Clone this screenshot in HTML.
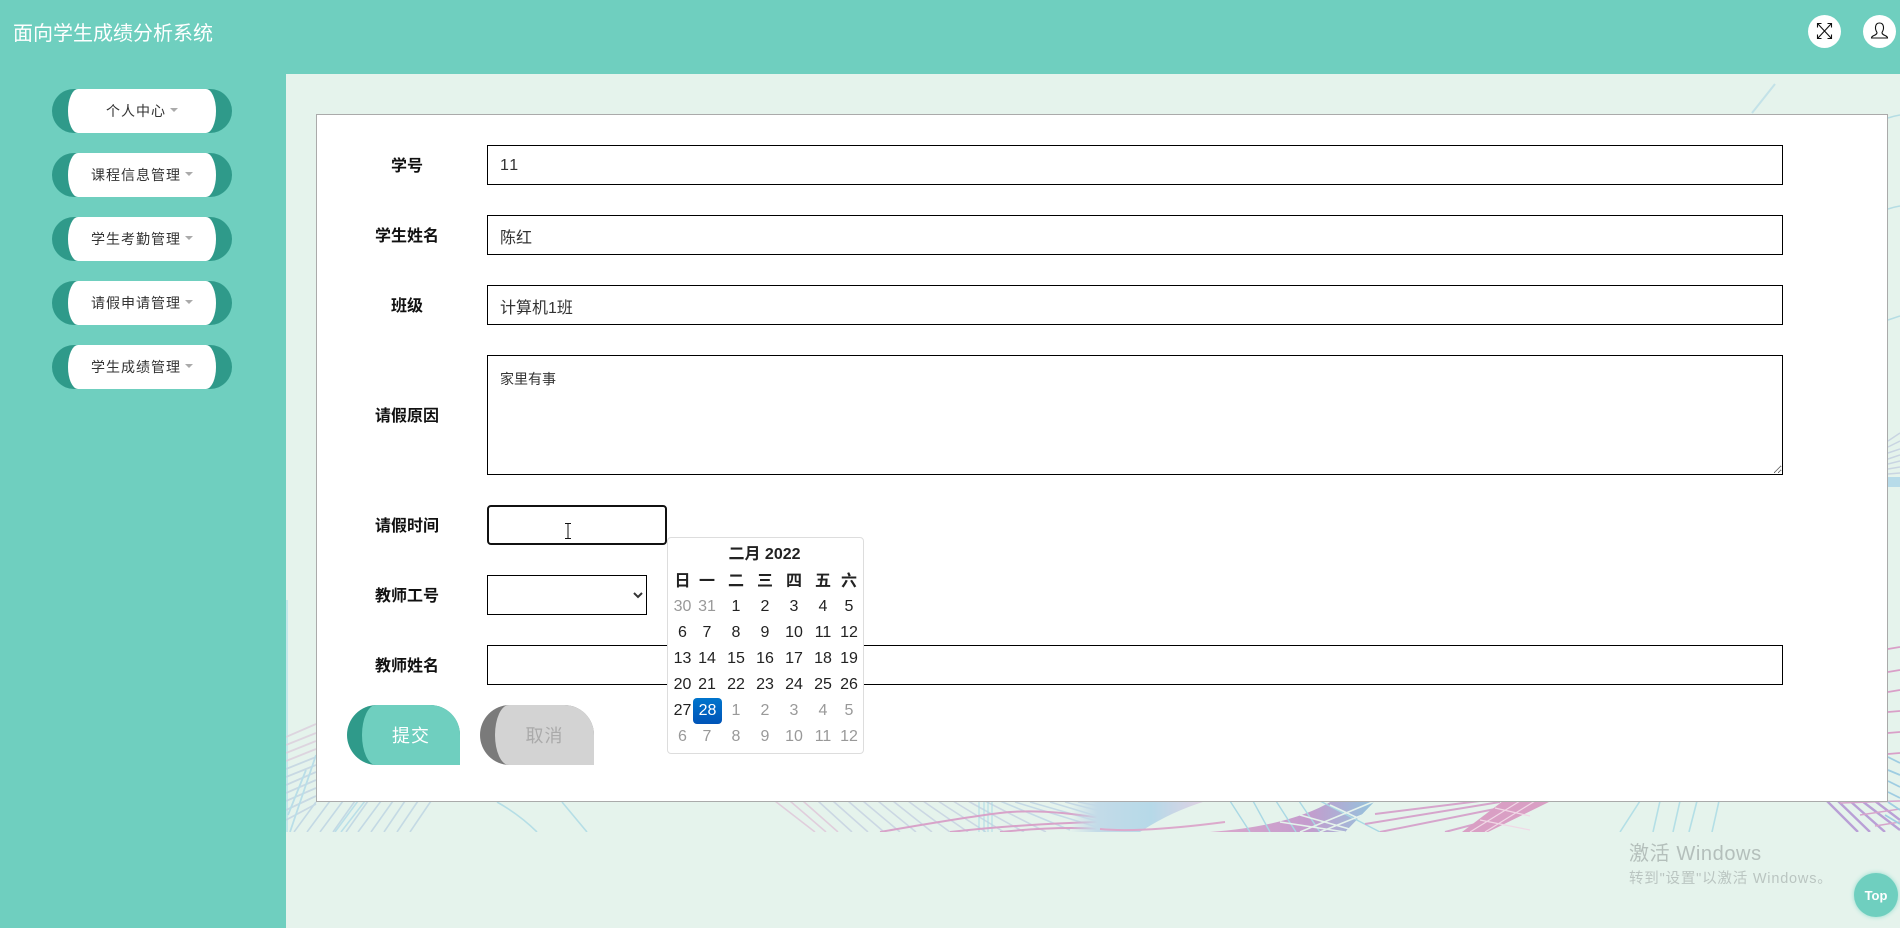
<!DOCTYPE html>
<html lang="zh">
<head>
<meta charset="utf-8">
<title>面向学生成绩分析系统</title>
<style>
*{box-sizing:border-box}
html,body{margin:0;padding:0;width:1900px;height:928px;overflow:hidden;background:#e5f3ec;font-family:"Liberation Sans","Noto Sans CJK SC",sans-serif;color:#222}
.abs{position:absolute}
#hdr{position:absolute;left:0;top:0;width:1900px;height:74px;background:#6fcfbf}
#title{position:absolute;left:13px;top:19px;font-size:20px;line-height:30px;color:#fff;white-space:nowrap}
.circ{position:absolute;top:15px;width:33px;height:33px;border-radius:50%;background:#fff}
#side{position:absolute;left:0;top:74px;width:286px;height:854px;background:#6fcfbf}
.nav{position:absolute;left:52px;width:180px;height:44px;border-radius:22px;background:#2f9a8a}
.nav div{position:absolute;left:16px;top:0;width:148px;height:44px;background:#fff;border-radius:10px/22px;display:flex;align-items:center;justify-content:center;font-size:14px;letter-spacing:1px;color:#333;padding-bottom:1px}
.nav i{display:inline-block;width:0;height:0;border-left:4px solid transparent;border-right:4px solid transparent;border-top:4px solid #aaa;margin-left:4px;margin-top:-2px}
#bg{position:absolute;left:286px;top:74px}
#panel{position:absolute;left:316px;top:114px;width:1572px;height:688px;background:#fff;border:1px solid #aaa;border-right-color:#aaa}
.lb{position:absolute;left:347px;width:120px;text-align:center;font-weight:bold;font-size:16px;line-height:24px;color:#111;white-space:nowrap}
input,textarea,select{position:absolute;left:487px;border:1px solid #000;background:#fff;font-family:"Liberation Sans","Noto Sans CJK SC",sans-serif;color:#333;font-size:16px;padding:2px 12px 0;outline:none;border-radius:0;margin:0}
.ip{width:1296px;height:40px}
textarea{width:1296px;height:120px;top:355px;font-size:14px;padding:13px 12px 12px;line-height:20px}
#dt{left:487px;top:505px;width:180px;height:40px;border:2px solid #111;border-radius:4px}
select{top:575px;width:160px;height:40px;padding:0}
.btn{position:absolute;top:705px;width:113px;height:60px;border-radius:30px 30px 0 30px}
.btn div{position:absolute;left:15px;top:0;width:98px;height:60px;border-radius:14px 30px 0 14px/30px 30px 0 30px;text-align:center;font-size:18px;line-height:62px;letter-spacing:1px}
#cal{position:absolute;left:667px;top:537px;width:197px;height:217px;background:#fff;border:1px solid #ddd;border-radius:4px}
#calg{position:absolute;left:670px;top:542px;display:grid;grid-template-columns:25px 24px 34px 24px 34px 24px 28px;grid-auto-rows:26px;font-size:16px;line-height:26px;text-align:center;color:#222;white-space:nowrap}
#calg b{font-weight:bold;position:relative;top:1px}
#calg .t{grid-column:1/8;font-weight:bold;margin-left:-4px}
#calg span{display:block}
#calg .o{color:#999}
#calg .a{background:linear-gradient(#0075cc,#0054b8);color:#fff;border-radius:4px;height:26px;margin:0 -3px 0 -2px}
#w1{position:absolute;left:1629px;top:841px;font-size:20px;line-height:26px;color:#b4bfbb;white-space:nowrap;letter-spacing:.6px}
#w2{position:absolute;left:1629px;top:869px;font-size:14.5px;line-height:20px;color:#bac5c1;white-space:nowrap;letter-spacing:.8px}
#top{position:absolute;left:1854px;top:873px;width:44px;height:44px;border-radius:50%;background:#6fcfbf;box-shadow:0 0 5px #8fdccd;color:#fff;font-size:13px;font-weight:bold;text-align:center;line-height:46px}
</style>
</head>
<body>
<svg id="bg" width="1614" height="758" viewBox="286 74 1614 758" xmlns="http://www.w3.org/2000/svg">
<defs>
<linearGradient id="g1" x1="0" x2="1" y1="0" y2="0"><stop offset="0" stop-color="#c5d9e6" stop-opacity="0"/><stop offset=".2" stop-color="#c3dbe8"/><stop offset=".6" stop-color="#b6d9e8"/><stop offset="1" stop-color="#e2d2e4"/></linearGradient>
<linearGradient id="g2" x1="0" x2="1" y1="0" y2="0"><stop offset="0" stop-color="#dba8cc"/><stop offset=".6" stop-color="#c49ccd"/><stop offset="1" stop-color="#93c4dd"/></linearGradient>
</defs>
<rect x="286" y="74" width="1614" height="758" fill="#e5f3ec"/>
<rect x="286" y="600" width="2" height="232" fill="#c4e8ea"/>
<path d="M1752 113L1775 84" stroke="#c3e2e8" stroke-width="2" fill="none"/>
<path d="M1888 118Q1894 116 1900 115M1888 209Q1894 207 1900 206M1888 320Q1894 318 1900 316" stroke="#b5dde4" stroke-width="1.5" fill="none"/>
<path d="M1888 441L1900 433M1888 447L1900 441M1888 453L1900 449M1888 459L1900 455M1888 464L1900 461M1888 469L1900 467M1888 474L1900 473" stroke="#c9d5e2" stroke-width="1.5" fill="none"/>
<rect x="1888" y="477" width="12" height="10" fill="#b7dbe9"/>
<path d="M1888 649L1900 647M1888 672L1900 670M1888 692L1900 690M1888 712L1900 711M1888 733L1900 732M1888 754L1900 753" stroke="#d99fc8" stroke-width="1.8" fill="none"/>
<path d="M1888 757L1900 763M1888 770L1900 775M1888 781L1900 787M1888 792L1900 798" stroke="#9fcde2" stroke-width="1.8" fill="none"/>
<g opacity=".85">
<path d="M286 737L316 724M286 745L316 733M286 753L316 741M286 761L316 749" stroke="#dcd0dd" stroke-width="1.8" fill="none"/>
<path d="M286 769L316 757M286 777L316 765M286 785L316 772M286 793L316 780M286 801L316 788M286 810L316 796M286 820L316 804" stroke="#c3d5e2" stroke-width="1.8" fill="none"/>
<path d="M290 832L316 755M288 815L306 770" stroke="#b2dbe8" stroke-width="1.8" fill="none"/>
<path d="M294 832L316 802M307 832L330 801M320 832L343 801M333 832L355 801M346 832L368 801M358 832L381 801M371 832L393 801M384 832L405 801M397 832L418 801M410 832L431 801" stroke="#bed5e3" stroke-width="1.6" fill="none"/>
<path d="M335 832L358 801M341 832L365 801" stroke="#b3dce8" stroke-width="1.6" fill="none"/>
</g>
<path d="M497 802Q520 815 537 832M562 802L587 832" stroke="#b5dee6" stroke-width="1.6" fill="none"/>
<g opacity=".85">
<path d="M775 801L815 832M790 801L826 832M803 801L838 832" stroke="#e0c8da" stroke-width="1.6" fill="none"/>
<path d="M818 801L852 832M833 801L868 832M848 801L884 832M863 801L900 832M878 801L916 832M893 801L932 832M908 801L950 832M923 801L968 832M938 801L986 832M953 801L1004 832M968 801L1024 832M985 801L1046 832" stroke="#c7d3e2" stroke-width="1.6" fill="none"/>
<path d="M1000 801L1070 830M1015 802L1100 828M1030 802L1100 822M1050 802L1100 817M1065 802L1100 811M1078 802L1100 806" stroke="#c0d6e6" stroke-width="1.6" fill="none"/>
</g>
<path d="M984 801V832M988 801V832M992 801V832M979 801V832" stroke="#abdbe6" stroke-width="1" fill="none"/>
<path d="M880 832Q960 818 1000 813T1100 818M950 832Q1020 824 1100 822M1000 832Q1060 826 1100 829" stroke="#d8a3c9" stroke-width="2" fill="none"/>
<path d="M1070 801H1206Q1170 812 1140 832H1070Z" fill="url(#g1)"/>
<path d="M1100 829Q1140 833 1225 822" stroke="#dca9cc" stroke-width="2" fill="none"/>
<path d="M1210 832Q1290 826 1332 801H1375L1345 832Z" fill="url(#g2)"/>
<path d="M1230 801L1250 832M1253 801L1270 832M1276 801L1296 832M1299 801L1320 832M1320 801L1380 832" stroke="#a9d8e4" stroke-width="1.4" fill="none"/>
<path d="M1300 832L1375 801M1320 832L1385 806M1280 822L1345 832M1300 815L1360 832M1330 805L1375 826" stroke="#e5f3ec" stroke-width="1.6" fill="none"/>
<path d="M1375 814L1480 801M1365 824L1500 802M1380 832L1510 806M1445 832L1510 815" stroke="#d6a5cc" stroke-width="2" fill="none"/>
<path d="M1462 832L1488 832L1551 801L1503 801Z" fill="#d99fc4"/>
<path d="M1470 832L1520 801M1485 832L1535 801M1480 820L1530 830M1495 808L1530 816" stroke="#f0d8e6" stroke-width="1.2" fill="none"/>
<path d="M1640 801L1620 832M1660 801L1653 832M1680 801L1673 832M1697 801L1689 832M1719 801L1712 832" stroke="#b3dfe6" stroke-width="1.6" fill="none"/>
<path d="M1827 801L1858 832M1838 801L1870 832M1850 801L1885 832M1862 801L1900 830M1875 801L1900 820" stroke="#b9a0d6" stroke-width="2.4" fill="none"/>
<path d="M1840 803L1900 801M1860 815L1900 809M1875 826L1900 822" stroke="#d7a4cc" stroke-width="1.6" fill="none"/>
<path d="M1888 802L1900 810M1885 815L1900 824" stroke="#9fcde2" stroke-width="1.8" fill="none"/>
</svg>

<div id="hdr"></div>
<div id="title">面向学生成绩分析系统</div>
<div class="circ" style="left:1808px"></div>
<div class="circ" style="left:1863px"></div>
<svg class="abs" style="left:1808px;top:15px" width="33" height="33" viewBox="0 0 33 33" fill="none" stroke="#111" stroke-width="1.1">
<path d="M10 9L23 23M23 9L10 23"/>
<path d="M9.5 12.5V8.5H13.5M23.5 12.5V8.5H19.5M9.5 19.5V23.5H13.5M23.5 19.5V23.5H19.5"/>
</svg>
<svg class="abs" style="left:1863px;top:15px" width="33" height="33" viewBox="0 0 33 33" fill="none" stroke="#111" stroke-width="1.1">
<path d="M14 17.5C11.5 13.5 12 8 16.5 8S21.5 13.5 19 17.5C19 19.5 21 20 23 21C24.2 21.7 24.5 22.5 24.5 23H8.5C8.5 22.5 8.8 21.7 10 21C12 20 14 19.5 14 17.5Z"/>
</svg>

<div id="side"></div>
<div class="nav" style="top:89px"><div>个人中心<i></i></div></div>
<div class="nav" style="top:153px"><div>课程信息管理<i></i></div></div>
<div class="nav" style="top:217px"><div>学生考勤管理<i></i></div></div>
<div class="nav" style="top:281px"><div>请假申请管理<i></i></div></div>
<div class="nav" style="top:345px"><div>学生成绩管理<i></i></div></div>

<div id="panel"></div>

<div class="lb" style="top:155px">学号</div>
<div class="lb" style="top:225px">学生姓名</div>
<div class="lb" style="top:295px">班级</div>
<div class="lb" style="top:405px">请假原因</div>
<div class="lb" style="top:515px">请假时间</div>
<div class="lb" style="top:585px">教师工号</div>
<div class="lb" style="top:655px">教师姓名</div>

<input class="ip" style="top:145px;letter-spacing:1.5px" value="11">
<input class="ip" style="top:215px" value="陈红">
<input class="ip" style="top:285px" value="计算机1班">
<textarea>家里有事</textarea>
<input id="dt" value="">
<select><option></option></select>
<input class="ip" style="top:645px" value="">

<div class="btn" style="left:347px;background:#2f9a8a"><div style="background:#6fcfbf;color:#fff">提交</div></div>
<div class="btn" style="left:480px;width:114px;background:#7a7a7a"><div style="width:99px;background:#d3d3d3;color:#aaa">取消</div></div>

<div id="cal"></div>
<div id="calg">
<span class="t">二月 2022</span>
<b>日</b><b>一</b><b>二</b><b>三</b><b>四</b><b>五</b><b>六</b>
<span class="o">30</span><span class="o">31</span><span>1</span><span>2</span><span>3</span><span>4</span><span>5</span>
<span>6</span><span>7</span><span>8</span><span>9</span><span>10</span><span>11</span><span>12</span>
<span>13</span><span>14</span><span>15</span><span>16</span><span>17</span><span>18</span><span>19</span>
<span>20</span><span>21</span><span>22</span><span>23</span><span>24</span><span>25</span><span>26</span>
<span>27</span><span class="a">28</span><span class="o">1</span><span class="o">2</span><span class="o">3</span><span class="o">4</span><span class="o">5</span>
<span class="o">6</span><span class="o">7</span><span class="o">8</span><span class="o">9</span><span class="o">10</span><span class="o">11</span><span class="o">12</span>
</div>

<svg class="abs" style="left:562px;top:521px" width="12" height="20" viewBox="0 0 12 20" fill="none" stroke="#111" stroke-width="1">
<path d="M3 2.5H9M3 17.5H9M6 2.5V17.5"/>
</svg>

<div id="w1">激活 Windows</div>
<div id="w2">转到"设置"以激活 Windows。</div>
<div id="top">Top</div>
</body>
</html>
